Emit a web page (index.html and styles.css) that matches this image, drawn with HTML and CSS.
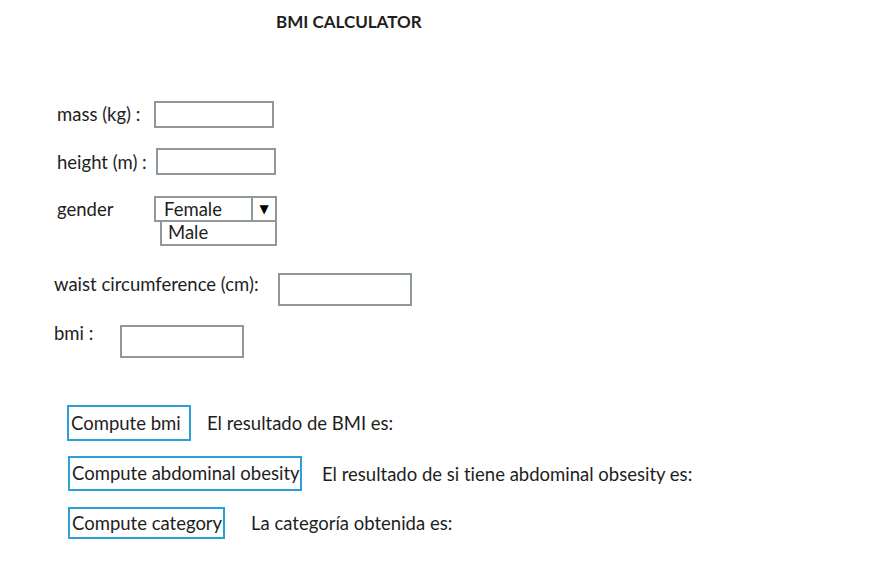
FILE: index.html
```html
<!DOCTYPE html>
<html>
<head>
<meta charset="utf-8">
<link rel="stylesheet" href="styles.css">
</head>
<body>
<h1 class="title">BMI CALCULATOR</h1>
<div class="form">
  <div class="row r-mass">
    <span class="label lbl-mass">mass (kg) :</span>
    <span class="box box-mass"></span>
  </div>
  <div class="row r-height">
    <span class="label lbl-height">height (m) :</span>
    <span class="box box-height"></span>
  </div>
  <div class="row r-gender">
    <span class="label lbl-gender">gender</span>
    <div class="select-wrap">
      <div class="select">
        <span class="sel-value">Female</span>
        <span class="sel-arrow">▼</span>
      </div>
      <div class="option">Male</div>
    </div>
  </div>
  <div class="row r-waist">
    <span class="label lbl-waist">waist circumference (cm):</span>
    <span class="box box-waist"></span>
  </div>
  <div class="row r-bmi">
    <span class="label lbl-bmi">bmi :</span>
    <span class="box box-bmi"></span>
  </div>
  <div class="row r-btn1">
    <span class="btn btn-bmi">Compute bmi</span>
    <span class="result res-bmi">El resultado de BMI es:</span>
  </div>
  <div class="row r-btn2">
    <span class="btn btn-abd">Compute abdominal obesity</span>
    <span class="result res-abd">El resultado de si tiene abdominal obsesity es:</span>
  </div>
  <div class="row r-btn3">
    <span class="btn btn-cat">Compute category</span>
    <span class="result res-cat">La categoría obtenida es:</span>
  </div>
</div>
</body>
</html>
```
FILE: styles.css
```css
html, body {
  margin: 0;
  padding: 0;
  background: #ffffff;
}
body {
  font-family: Lato, "Open Sans", sans-serif;
  font-size: 18.5px;
  font-variant-ligatures: none;
  color: #1e1e1e;
  width: 896px;
  height: 585px;
  overflow: hidden;
}
.title {
  margin: 0;
  padding: 12px 0 0 276px;
  font-size: 17px;
  font-weight: 700;
  line-height: 20px;
}
.form {
  display: flex;
  flex-direction: column;
}
.row {
  display: flex;
  align-items: center;
  line-height: 22px;
}
.label { white-space: nowrap; }
.box {
  display: block;
  border: 2px solid #8d979c;
  box-sizing: border-box;
  background: #fff;
}
.r-mass { margin-top: 69px; padding-left: 57px; height: 26px; }
.lbl-mass { width: 97px; }
.box-mass { width: 120px; height: 27px; }

.r-height { margin-top: 21px; padding-left: 57px; height: 27px; }
.lbl-height { width: 99px; }
.box-height { width: 120px; height: 27px; }

.r-gender { margin-top: 21px; padding-left: 57px; align-items: flex-start; }
.lbl-gender { width: 97px; line-height: 26px; }
.select-wrap { display: flex; flex-direction: column; align-items: flex-end; width: 123px; }
.select {
  display: flex;
  width: 123px;
  height: 26px;
  box-sizing: border-box;
  border: 2px solid #8d979c;
}
.sel-value { flex: 1; padding-left: 8px; line-height: 22px; border-right: 2px solid #8d979c; }
.sel-arrow {
  width: 22px;
  text-align: center;
  font-family: "DejaVu Sans", sans-serif;
  font-size: 12px;
  line-height: 22px;
  color: #000;
}
.option {
  width: 117px;
  height: 24px;
  box-sizing: border-box;
  border: 2px solid #8d979c;
  border-top: none;
  padding-left: 6px;
  line-height: 21px;
}

.r-waist { margin-top: 27px; padding-left: 54px; height: 33px; }
.lbl-waist { width: 224px; margin-top: -12px; }
.box-waist { width: 134px; height: 33px; }

.r-bmi { margin-top: 19px; padding-left: 54px; height: 33px; }
.lbl-bmi { width: 66px; margin-top: -18px; }
.box-bmi { width: 124px; height: 33px; }

.btn {
  display: block;
  border: 2px solid #2a9fd8;
  box-sizing: border-box;
  padding-left: 2px;
  background: #fff;
  white-space: nowrap;
}
.r-btn1 { margin-top: 47px; padding-left: 67px; }
.btn-bmi { width: 124px; height: 36px; line-height: 32px; }
.res-bmi { margin-left: 16px; }

.r-btn2 { margin-top: 15px; padding-left: 68px; }
.btn-abd { width: 234px; height: 35px; line-height: 31px; }
.res-abd { margin-left: 20px; }

.r-btn3 { margin-top: 16px; padding-left: 68px; }
.btn-cat { width: 157px; height: 32px; line-height: 28px; }
.res-cat { margin-left: 26px; }
```
